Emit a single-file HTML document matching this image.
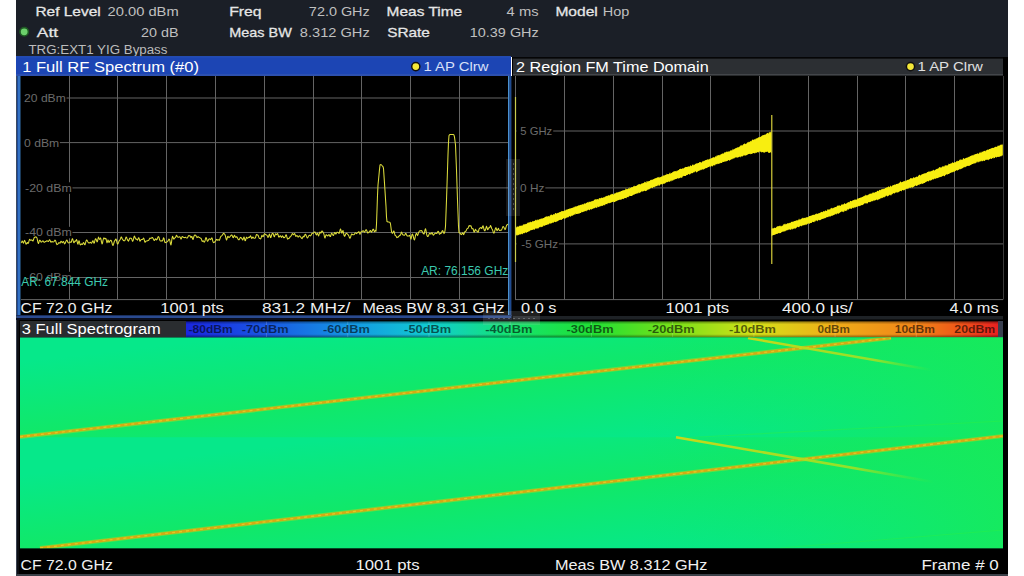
<!DOCTYPE html>
<html><head><meta charset="utf-8"><style>html,body{margin:0;padding:0;background:#fff;width:1024px;height:576px;overflow:hidden}svg{display:block}</style></head>
<body><svg width="1024" height="576" viewBox="0 0 1024 576" font-family="'Liberation Sans', sans-serif"><rect x="0" y="0" width="1024" height="576" fill="#ffffff" />
<rect x="16" y="0" width="992" height="57" fill="#1b1f27" />
<text x="35.41" y="16" font-size="13.5" fill="#e6e6e6" text-anchor="start" font-weight="normal" textLength="65.34" lengthAdjust="spacingAndGlyphs"  stroke="#e6e6e6" stroke-width="0.28">Ref Level</text>
<text x="107.56" y="16" font-size="13.5" fill="#c0c0c0" text-anchor="start" font-weight="normal" textLength="71.11" lengthAdjust="spacingAndGlyphs" >20.00 dBm</text>
<text x="36.86" y="37" font-size="13.5" fill="#e6e6e6" text-anchor="start" font-weight="normal" textLength="21.22" lengthAdjust="spacingAndGlyphs"  stroke="#e6e6e6" stroke-width="0.28">Att</text>
<text x="140.98" y="37" font-size="13.5" fill="#c0c0c0" text-anchor="start" font-weight="normal" textLength="37.48" lengthAdjust="spacingAndGlyphs" >20 dB</text>
<circle cx="24.2" cy="31.8" r="4.2" fill="#6cd06c" stroke="#1f5a24" stroke-width="1.6"/>
<text x="28.47" y="54.2" font-size="12.5" fill="#bcbcbc" text-anchor="start" font-weight="normal" textLength="138.99" lengthAdjust="spacingAndGlyphs" >TRG:EXT1 YIG Bypass</text>
<text x="229.19" y="16" font-size="13.5" fill="#e6e6e6" text-anchor="start" font-weight="normal" textLength="32.4" lengthAdjust="spacingAndGlyphs"  stroke="#e6e6e6" stroke-width="0.28">Freq</text>
<text x="308.88" y="16" font-size="13.5" fill="#c0c0c0" text-anchor="start" font-weight="normal" textLength="60.83" lengthAdjust="spacingAndGlyphs" >72.0 GHz</text>
<text x="229.3" y="37" font-size="13.5" fill="#e6e6e6" text-anchor="start" font-weight="normal" textLength="62.51" lengthAdjust="spacingAndGlyphs"  stroke="#e6e6e6" stroke-width="0.28">Meas BW</text>
<text x="299.84" y="37" font-size="13.5" fill="#c0c0c0" text-anchor="start" font-weight="normal" textLength="69.89" lengthAdjust="spacingAndGlyphs" >8.312 GHz</text>
<text x="386.61" y="16" font-size="13.5" fill="#e6e6e6" text-anchor="start" font-weight="normal" textLength="75.54" lengthAdjust="spacingAndGlyphs"  stroke="#e6e6e6" stroke-width="0.28">Meas Time</text>
<text x="506.63" y="16" font-size="13.5" fill="#c0c0c0" text-anchor="start" font-weight="normal" textLength="31.91" lengthAdjust="spacingAndGlyphs" >4 ms</text>
<text x="555.4" y="16" font-size="13.5" fill="#e6e6e6" text-anchor="start" font-weight="normal" textLength="42.42" lengthAdjust="spacingAndGlyphs"  stroke="#e6e6e6" stroke-width="0.28">Model</text>
<text x="602.74" y="16" font-size="13.5" fill="#c0c0c0" text-anchor="start" font-weight="normal" textLength="26.53" lengthAdjust="spacingAndGlyphs" >Hop</text>
<text x="387.16" y="37" font-size="13.5" fill="#e6e6e6" text-anchor="start" font-weight="normal" textLength="42.78" lengthAdjust="spacingAndGlyphs"  stroke="#e6e6e6" stroke-width="0.28">SRate</text>
<text x="469.82" y="37" font-size="13.5" fill="#c0c0c0" text-anchor="start" font-weight="normal" textLength="68.91" lengthAdjust="spacingAndGlyphs" >10.39 GHz</text>
<rect x="16" y="56.3" width="495" height="263.7" fill="#101828" />
<rect x="16" y="56.3" width="495" height="19.7" fill="#1c45b4" />
<rect x="16" y="56.3" width="495" height="1" fill="#2a55c0" />
<rect x="16" y="74" width="495" height="2" fill="#2c50b0" />
<rect x="16" y="76" width="1" height="244" fill="#3a4a60" />
<rect x="17" y="76" width="1" height="244" fill="#1e4a9a" />
<rect x="18" y="76" width="2" height="244" fill="#3272c4" />
<rect x="20" y="76" width="1" height="244" fill="#1a3a5a" />
<rect x="508" y="76" width="1.5" height="244" fill="#4a90d0" />
<rect x="509.5" y="76" width="1.5" height="244" fill="#1e4a90" />
<rect x="511" y="76" width="1" height="244" fill="#10203a" />
<rect x="16" y="315" width="496" height="1" fill="#1a3060" />
<rect x="17" y="316" width="494" height="2" fill="#2a4a90" />
<rect x="16" y="318" width="496" height="2" fill="#0c1020" />
<rect x="21" y="76" width="487" height="239" fill="#000" />
<rect x="512" y="57" width="496" height="263" fill="#000" />
<rect x="513" y="57" width="490" height="1.8" fill="#050506" />
<rect x="513" y="58.6" width="490" height="15.6" fill="#2c2f33" />
<rect x="513" y="74" width="490" height="1.6" fill="#43464a" />
<rect x="515" y="76" width="488" height="240" fill="#000" />
<rect x="513" y="316" width="490" height="3.5" fill="#1e2226" />
<line x1="69.50" y1="76" x2="69.50" y2="299.6" stroke="#646464" stroke-width="1"/>
<line x1="117.50" y1="76" x2="117.50" y2="299.6" stroke="#646464" stroke-width="1"/>
<line x1="166.50" y1="76" x2="166.50" y2="299.6" stroke="#646464" stroke-width="1"/>
<line x1="215.50" y1="76" x2="215.50" y2="299.6" stroke="#646464" stroke-width="1"/>
<line x1="264.50" y1="76" x2="264.50" y2="299.6" stroke="#646464" stroke-width="1"/>
<line x1="313.50" y1="76" x2="313.50" y2="299.6" stroke="#646464" stroke-width="1"/>
<line x1="361.50" y1="76" x2="361.50" y2="299.6" stroke="#646464" stroke-width="1"/>
<line x1="410.50" y1="76" x2="410.50" y2="299.6" stroke="#646464" stroke-width="1"/>
<line x1="459.50" y1="76" x2="459.50" y2="299.6" stroke="#646464" stroke-width="1"/>
<line x1="21" y1="98.00" x2="508" y2="98.00" stroke="#646464" stroke-width="1"/>
<line x1="21" y1="142.60" x2="508" y2="142.60" stroke="#646464" stroke-width="1"/>
<line x1="21" y1="187.90" x2="508" y2="187.90" stroke="#646464" stroke-width="1"/>
<line x1="21" y1="232.50" x2="508" y2="232.50" stroke="#646464" stroke-width="1"/>
<line x1="21" y1="277.50" x2="508" y2="277.50" stroke="#646464" stroke-width="1"/>
<line x1="21" y1="299.60" x2="508" y2="299.60" stroke="#646464" stroke-width="1"/>
<line x1="515.50" y1="76" x2="515.50" y2="299.6" stroke="#646464" stroke-width="1"/>
<line x1="564.50" y1="76" x2="564.50" y2="299.6" stroke="#646464" stroke-width="1"/>
<line x1="613.50" y1="76" x2="613.50" y2="299.6" stroke="#646464" stroke-width="1"/>
<line x1="662.50" y1="76" x2="662.50" y2="299.6" stroke="#646464" stroke-width="1"/>
<line x1="710.50" y1="76" x2="710.50" y2="299.6" stroke="#646464" stroke-width="1"/>
<line x1="759.50" y1="76" x2="759.50" y2="299.6" stroke="#646464" stroke-width="1"/>
<line x1="808.50" y1="76" x2="808.50" y2="299.6" stroke="#646464" stroke-width="1"/>
<line x1="857.50" y1="76" x2="857.50" y2="299.6" stroke="#646464" stroke-width="1"/>
<line x1="905.50" y1="76" x2="905.50" y2="299.6" stroke="#646464" stroke-width="1"/>
<line x1="954.50" y1="76" x2="954.50" y2="299.6" stroke="#646464" stroke-width="1"/>
<line x1="515" y1="131.00" x2="1003" y2="131.00" stroke="#646464" stroke-width="1"/>
<line x1="515" y1="187.90" x2="1003" y2="187.90" stroke="#646464" stroke-width="1"/>
<line x1="515" y1="243.90" x2="1003" y2="243.90" stroke="#646464" stroke-width="1"/>
<line x1="515" y1="299.60" x2="1003" y2="299.60" stroke="#646464" stroke-width="1"/>
<line x1="1003.50" y1="76" x2="1003.50" y2="299.5" stroke="#3a3a3a" stroke-width="1"/>
<rect x="21" y="92.3" width="45.5" height="11.5" fill="#000" />
<text x="24.09" y="101.8" font-size="11" fill="#6c6c6c" text-anchor="start" font-weight="normal" textLength="41.71" lengthAdjust="spacingAndGlyphs" >20 dBm</text>
<rect x="21" y="137.3" width="38.9" height="11.5" fill="#000" />
<text x="24.11" y="146.8" font-size="11" fill="#6c6c6c" text-anchor="start" font-weight="normal" textLength="35.14" lengthAdjust="spacingAndGlyphs" >0 dBm</text>
<rect x="21" y="182.3" width="51.5" height="11.5" fill="#000" />
<text x="25.04" y="191.8" font-size="11" fill="#6c6c6c" text-anchor="start" font-weight="normal" textLength="46.82" lengthAdjust="spacingAndGlyphs" >-20 dBm</text>
<rect x="21" y="226.8" width="51.5" height="11.5" fill="#000" />
<text x="25.04" y="236.3" font-size="11" fill="#6c6c6c" text-anchor="start" font-weight="normal" textLength="46.82" lengthAdjust="spacingAndGlyphs" >-40 dBm</text>
<rect x="21" y="271.8" width="51.5" height="11.5" fill="#000" />
<text x="25.04" y="281.3" font-size="11" fill="#6c6c6c" text-anchor="start" font-weight="normal" textLength="46.82" lengthAdjust="spacingAndGlyphs" >-60 dBm</text>
<rect x="516.5" y="125.80000000000001" width="36.700000000000045" height="11.5" fill="#000" />
<text x="520.35" y="135.3" font-size="11" fill="#6c6c6c" text-anchor="start" font-weight="normal" textLength="31.9" lengthAdjust="spacingAndGlyphs" >5 GHz</text>
<rect x="516.5" y="182.3" width="28.799999999999955" height="11.5" fill="#000" />
<text x="520.13" y="191.8" font-size="11" fill="#6c6c6c" text-anchor="start" font-weight="normal" textLength="24.28" lengthAdjust="spacingAndGlyphs" >0 Hz</text>
<rect x="516.5" y="238.3" width="42.39999999999998" height="11.5" fill="#000" />
<text x="521.28" y="247.8" font-size="11" fill="#6c6c6c" text-anchor="start" font-weight="normal" textLength="36.73" lengthAdjust="spacingAndGlyphs" >-5 GHz</text>
<polyline points="21.0,243.0 21.5,242.5 22.0,241.1 22.5,241.1 23.0,242.5 23.5,243.1 24.0,241.6 24.5,240.4 25.0,241.0 25.5,242.9 26.0,244.1 26.5,244.0 27.0,242.8 27.5,242.5 28.0,243.4 28.5,243.1 29.0,240.9 29.5,239.3 30.0,239.7 30.5,240.3 31.0,240.2 31.5,239.9 32.0,240.1 32.5,240.8 33.0,241.0 33.5,239.8 34.0,238.1 34.5,237.3 35.0,237.3 35.5,237.0 36.0,236.8 36.5,237.3 37.0,238.0 37.5,240.3 38.0,242.7 38.5,243.5 39.0,242.0 39.5,240.2 40.0,240.2 40.5,241.1 41.0,242.0 41.5,242.1 42.0,241.6 42.5,241.1 43.0,240.8 43.5,241.5 44.0,242.2 44.5,242.3 45.0,241.8 45.5,241.5 46.0,241.4 46.5,241.0 47.0,240.8 47.5,241.0 48.0,241.5 48.5,241.5 49.0,240.6 49.5,239.7 50.0,240.1 50.5,241.4 51.0,242.2 51.5,241.9 52.0,241.5 52.5,241.7 53.0,242.0 53.5,241.9 54.0,241.6 54.5,240.8 55.0,240.1 55.5,240.4 56.0,242.1 56.5,243.8 57.0,244.6 57.5,244.3 58.0,243.8 58.5,243.2 59.0,242.6 59.5,242.9 60.0,243.2 60.5,242.1 61.0,241.2 61.5,241.6 62.0,242.6 62.5,242.6 63.0,241.7 63.5,241.5 64.0,242.6 64.5,243.9 65.0,243.5 65.5,242.2 66.0,241.2 66.5,240.3 67.0,240.1 67.5,241.2 68.0,242.6 68.5,242.9 69.0,242.7 69.5,242.4 70.0,242.0 70.5,242.1 71.0,242.4 71.5,241.5 72.0,239.3 72.5,238.7 73.0,240.0 73.5,242.1 74.0,242.8 74.5,241.9 75.0,241.1 75.5,241.3 76.0,240.7 76.5,239.5 77.0,240.6 77.5,243.5 78.0,244.2 78.5,242.2 79.0,240.7 79.5,242.0 80.0,244.3 80.5,244.9 81.0,244.3 81.5,243.9 82.0,244.4 82.5,244.4 83.0,243.3 83.5,242.5 84.0,243.0 84.5,244.5 85.0,244.8 85.5,243.2 86.0,241.1 86.5,240.0 87.0,240.3 87.5,241.3 88.0,242.1 88.5,242.7 89.0,243.0 89.5,242.9 90.0,242.4 90.5,242.3 91.0,243.0 91.5,243.3 92.0,242.5 92.5,241.1 93.0,240.7 93.5,242.1 94.0,243.3 94.5,242.4 95.0,240.0 95.5,238.7 96.0,238.9 96.5,240.4 97.0,241.9 97.5,241.4 98.0,238.8 98.5,237.1 99.0,238.3 99.5,239.4 100.0,238.9 100.5,237.9 101.0,239.3 101.5,242.2 102.0,243.9 102.5,243.1 103.0,240.4 103.5,238.6 104.0,237.9 104.5,238.5 105.0,238.9 105.5,238.3 106.0,238.7 106.5,240.9 107.0,242.8 107.5,241.5 108.0,239.9 108.5,240.9 109.0,242.5 109.5,242.0 110.0,240.8 110.5,240.3 111.0,240.3 111.5,241.1 112.0,242.9 112.5,244.9 113.0,245.5 113.5,244.4 114.0,242.5 114.5,241.0 115.0,240.4 115.5,239.4 116.0,239.0 116.5,240.5 117.0,242.9 117.5,244.0 118.0,243.7 118.5,242.5 119.0,241.1 119.5,240.3 120.0,239.8 120.5,238.7 121.0,237.3 121.5,237.0 122.0,238.2 122.5,239.3 123.0,239.9 123.5,240.5 124.0,240.8 124.5,240.8 125.0,240.4 125.5,238.7 126.0,237.1 126.5,237.2 127.0,238.7 127.5,239.9 128.0,240.6 128.5,241.1 129.0,240.1 129.5,238.7 130.0,238.1 130.5,238.3 131.0,238.3 131.5,238.5 132.0,239.9 132.5,241.3 133.0,240.9 133.5,239.1 134.0,236.9 134.5,236.1 135.0,237.2 135.5,238.6 136.0,239.2 136.5,239.1 137.0,239.7 137.5,240.1 138.0,239.0 138.5,237.7 139.0,237.9 139.5,240.0 140.0,241.2 140.5,240.7 141.0,239.6 141.5,239.5 142.0,239.6 142.5,239.4 143.0,238.8 143.5,238.1 144.0,238.9 144.5,241.0 145.0,242.3 145.5,241.8 146.0,240.9 146.5,240.9 147.0,240.9 147.5,240.7 148.0,240.6 148.5,240.5 149.0,239.9 149.5,238.8 150.0,238.0 150.5,238.3 151.0,238.5 151.5,238.0 152.0,237.4 152.5,237.6 153.0,238.3 153.5,239.2 154.0,240.3 154.5,240.5 155.0,239.6 155.5,238.8 156.0,239.1 156.5,239.9 157.0,239.6 157.5,238.1 158.0,236.9 158.5,236.6 159.0,237.5 159.5,239.3 160.0,240.6 160.5,241.0 161.0,240.9 161.5,240.8 162.0,241.0 162.5,240.7 163.0,239.4 163.5,237.8 164.0,238.4 164.5,241.1 165.0,242.7 165.5,242.6 166.0,242.3 166.5,242.3 167.0,241.9 167.5,241.4 168.0,240.9 168.5,240.0 169.0,239.1 169.5,239.4 170.0,241.3 170.5,244.0 171.0,244.9 171.5,242.2 172.0,238.3 172.5,236.3 173.0,237.0 173.5,238.8 174.0,239.1 174.5,238.2 175.0,237.8 175.5,237.6 176.0,236.3 176.5,235.3 177.0,235.9 177.5,236.9 178.0,237.2 178.5,237.3 179.0,237.1 179.5,236.7 180.0,236.9 180.5,238.1 181.0,239.1 181.5,238.3 182.0,236.7 182.5,236.5 183.0,237.0 183.5,237.4 184.0,237.4 184.5,237.6 185.0,237.6 185.5,237.2 186.0,237.6 186.5,237.9 187.0,238.1 187.5,237.8 188.0,236.7 188.5,235.8 189.0,235.6 189.5,235.7 190.0,235.8 190.5,237.0 191.0,237.6 191.5,236.6 192.0,236.6 192.5,238.5 193.0,239.5 193.5,238.0 194.0,236.2 194.5,235.3 195.0,235.0 195.5,235.2 196.0,235.7 196.5,236.7 197.0,237.6 197.5,237.3 198.0,236.7 198.5,236.8 199.0,237.3 199.5,237.4 200.0,237.8 200.5,238.2 201.0,238.2 201.5,239.4 202.0,241.1 202.5,241.4 203.0,240.7 203.5,241.1 204.0,242.0 204.5,242.1 205.0,240.9 205.5,238.7 206.0,237.5 206.5,238.3 207.0,240.2 207.5,241.2 208.0,240.9 208.5,239.8 209.0,239.0 209.5,238.8 210.0,239.2 210.5,239.6 211.0,239.1 211.5,238.0 212.0,238.0 212.5,239.8 213.0,241.8 213.5,242.6 214.0,242.5 214.5,242.1 215.0,241.7 215.5,241.0 216.0,240.1 216.5,239.4 217.0,239.6 217.5,240.2 218.0,240.1 218.5,239.7 219.0,240.0 219.5,240.2 220.0,238.6 220.5,237.0 221.0,236.2 221.5,236.0 222.0,235.5 222.5,234.9 223.0,234.0 223.5,233.2 224.0,233.6 224.5,234.0 225.0,234.7 225.5,236.1 226.0,238.6 226.5,240.0 227.0,239.0 227.5,236.9 228.0,236.2 228.5,237.2 229.0,237.6 229.5,237.2 230.0,236.6 230.5,236.0 231.0,235.4 231.5,235.0 232.0,235.1 232.5,236.2 233.0,237.6 233.5,237.7 234.0,236.1 234.5,235.3 235.0,236.3 235.5,237.3 236.0,237.3 236.5,236.7 237.0,237.0 237.5,237.9 238.0,238.9 238.5,239.8 239.0,239.8 239.5,239.2 240.0,238.1 240.5,237.4 241.0,237.5 241.5,238.1 242.0,238.8 242.5,239.9 243.0,239.7 243.5,238.0 244.0,237.0 244.5,238.4 245.0,240.7 245.5,240.5 246.0,238.6 246.5,237.2 247.0,237.8 247.5,238.3 248.0,237.8 248.5,237.3 249.0,237.3 249.5,237.4 250.0,236.5 250.5,235.8 251.0,236.7 251.5,238.3 252.0,238.4 252.5,237.2 253.0,237.1 253.5,237.9 254.0,238.1 254.5,238.2 255.0,238.3 255.5,237.6 256.0,235.8 256.5,234.5 257.0,234.6 257.5,235.0 258.0,235.3 258.5,236.3 259.0,237.9 259.5,238.5 260.0,238.5 260.5,239.0 261.0,238.3 261.5,236.3 262.0,235.2 262.5,236.1 263.0,236.8 263.5,236.1 264.0,234.6 264.5,233.7 265.0,234.0 265.5,234.5 266.0,234.8 266.5,234.9 267.0,235.3 267.5,236.4 268.0,237.4 268.5,236.8 269.0,235.0 269.5,234.1 270.0,235.6 270.5,237.6 271.0,237.3 271.5,235.3 272.0,233.8 272.5,233.4 273.0,233.5 273.5,234.8 274.0,236.4 274.5,236.7 275.0,235.1 275.5,233.8 276.0,234.2 276.5,234.7 277.0,234.2 277.5,233.5 278.0,234.5 278.5,236.3 279.0,237.2 279.5,236.7 280.0,235.9 280.5,235.7 281.0,236.7 281.5,237.4 282.0,236.6 282.5,235.9 283.0,236.3 283.5,237.5 284.0,237.8 284.5,237.6 285.0,237.0 285.5,235.8 286.0,234.7 286.5,235.3 287.0,237.5 287.5,239.1 288.0,239.0 288.5,238.4 289.0,238.4 289.5,237.9 290.0,236.9 290.5,236.2 291.0,236.1 291.5,235.5 292.0,234.1 292.5,233.5 293.0,234.1 293.5,234.8 294.0,234.3 294.5,233.5 295.0,234.1 295.5,235.8 296.0,236.4 296.5,235.9 297.0,235.5 297.5,236.0 298.0,237.0 298.5,237.0 299.0,236.2 299.5,235.8 300.0,236.1 300.5,236.8 301.0,237.4 301.5,238.3 302.0,238.6 302.5,237.9 303.0,236.8 303.5,236.2 304.0,236.9 304.5,236.2 305.0,234.5 305.5,234.2 306.0,235.0 306.5,236.4 307.0,237.6 307.5,238.0 308.0,237.2 308.5,236.1 309.0,235.5 309.5,235.2 310.0,235.6 310.5,235.9 311.0,235.4 311.5,234.2 312.0,233.4 312.5,233.2 313.0,233.2 313.5,233.0 314.0,232.2 314.5,232.1 315.0,232.0 315.5,233.0 316.0,234.4 316.5,234.9 317.0,233.8 317.5,233.1 318.0,234.6 318.5,235.9 319.0,235.0 319.5,232.8 320.0,232.1 320.5,232.9 321.0,233.0 321.5,231.8 322.0,230.9 322.5,231.3 323.0,232.2 323.5,232.9 324.0,234.4 324.5,237.0 325.0,238.0 325.5,236.3 326.0,234.8 326.5,234.8 327.0,235.5 327.5,235.9 328.0,235.8 328.5,235.0 329.0,234.6 329.5,235.3 330.0,236.5 330.5,236.5 331.0,234.8 331.5,233.2 332.0,233.4 332.5,234.4 333.0,235.3 333.5,235.5 334.0,234.1 334.5,232.6 335.0,232.5 335.5,233.7 336.0,233.9 336.5,233.0 337.0,232.3 337.5,232.2 338.0,232.4 338.5,233.0 339.0,233.4 339.5,232.4 340.0,230.2 340.5,229.0 341.0,230.3 341.5,232.8 342.0,233.1 342.5,231.2 343.0,230.5 343.5,232.6 344.0,235.3 344.5,236.3 345.0,235.8 345.5,234.5 346.0,233.4 346.5,233.2 347.0,233.5 347.5,234.1 348.0,234.6 348.5,235.3 349.0,236.4 349.5,237.7 350.0,238.3 350.5,237.4 351.0,235.6 351.5,234.1 352.0,234.0 352.5,234.5 353.0,234.8 353.5,234.7 354.0,234.7 354.5,234.2 355.0,232.9 355.5,232.8 356.0,233.2 356.5,233.6 357.0,233.2 357.5,232.8 358.0,232.5 358.5,231.8 359.0,231.8 359.5,233.2 360.0,234.3 360.5,233.3 361.0,232.0 361.5,231.7 362.0,231.7 362.5,231.1 363.0,230.7 363.5,230.9 364.0,231.6 364.5,232.3 365.0,231.5 365.5,230.4 366.0,229.7 366.5,230.0 367.0,231.3 367.5,232.7 368.0,233.0 368.5,232.2 369.0,232.1 369.5,231.9 370.0,230.7 370.5,230.5 371.0,231.6 371.5,232.1 372.0,231.4 372.5,230.2 373.0,229.2 373.5,229.3 374.0,230.7 374.5,231.8 375.0,231.0 375.5,230.2 376.0,231.3 376.5,224.1 377.0,209.9 377.5,195.6 378.0,185.0 378.5,180.0 379.0,174.8 379.5,169.4 380.0,165.0 380.5,164.7 381.0,164.5 381.5,165.0 382.0,165.5 382.5,166.1 383.0,166.6 383.5,168.5 384.0,175.9 384.5,183.3 385.0,190.9 385.5,198.7 386.0,206.4 386.5,217.0 387.0,221.6 387.5,221.7 388.0,221.9 388.5,222.0 389.0,222.1 389.5,222.3 390.0,222.4 390.5,224.0 391.0,227.8 391.5,231.5 392.0,232.9 392.5,233.3 393.0,232.7 393.5,231.1 394.0,231.1 394.5,233.2 395.0,235.2 395.5,235.5 396.0,236.0 396.5,237.1 397.0,237.7 397.5,237.3 398.0,236.8 398.5,236.9 399.0,236.1 399.5,235.2 400.0,235.4 400.5,235.1 401.0,233.3 401.5,232.1 402.0,233.1 402.5,234.4 403.0,234.9 403.5,234.9 404.0,235.2 404.5,235.3 405.0,234.4 405.5,233.4 406.0,233.5 406.5,234.7 407.0,235.8 407.5,236.1 408.0,235.9 408.5,236.0 409.0,235.9 409.5,235.4 410.0,235.9 410.5,238.0 411.0,239.1 411.5,237.2 412.0,234.7 412.5,234.1 413.0,235.2 413.5,237.4 414.0,239.4 414.5,239.9 415.0,238.2 415.5,235.5 416.0,233.8 416.5,233.3 417.0,234.4 417.5,235.6 418.0,234.7 418.5,232.6 419.0,231.7 419.5,231.3 420.0,230.6 420.5,230.8 421.0,230.9 421.5,230.5 422.0,231.0 422.5,232.3 423.0,233.1 423.5,233.7 424.0,234.0 424.5,232.6 425.0,229.9 425.5,228.7 426.0,230.5 426.5,233.5 427.0,235.6 427.5,236.5 428.0,236.5 428.5,235.8 429.0,234.4 429.5,233.2 430.0,233.3 430.5,234.0 431.0,234.1 431.5,233.1 432.0,232.6 432.5,233.5 433.0,234.8 433.5,235.2 434.0,234.5 434.5,233.9 435.0,233.5 435.5,233.1 436.0,233.2 436.5,233.4 437.0,233.3 437.5,232.2 438.0,231.2 438.5,231.4 439.0,233.2 439.5,234.3 440.0,233.9 440.5,233.3 441.0,233.4 441.5,232.7 442.0,231.3 442.5,230.6 443.0,231.2 443.5,232.6 444.0,233.6 444.5,232.7 445.0,230.8 445.5,226.4 446.0,213.2 446.5,200.0 447.0,185.0 447.5,170.0 448.0,154.4 448.5,142.3 449.0,135.5 449.5,134.9 450.0,134.5 450.5,134.5 451.0,134.5 451.5,134.5 452.0,134.5 452.5,134.5 453.0,134.5 453.5,134.5 454.0,135.1 454.5,137.1 455.0,141.0 455.5,145.0 456.0,157.5 456.5,170.0 457.0,185.0 457.5,200.0 458.0,213.2 458.5,226.4 459.0,232.8 459.5,232.6 460.0,233.1 460.5,233.7 461.0,234.4 461.5,234.6 462.0,233.7 462.5,232.7 463.0,233.2 463.5,234.6 464.0,234.2 464.5,232.5 465.0,231.5 465.5,231.4 466.0,231.0 466.5,229.9 467.0,228.8 467.5,228.4 468.0,228.3 468.5,227.2 469.0,225.7 469.5,225.6 470.0,226.1 470.5,225.7 471.0,225.8 471.5,227.3 472.0,228.7 472.5,228.7 473.0,228.6 473.5,230.2 474.0,232.0 474.5,231.9 475.0,230.1 475.5,229.3 476.0,230.3 476.5,230.9 477.0,230.9 477.5,231.4 478.0,232.3 478.5,231.4 479.0,229.2 479.5,228.3 480.0,228.2 480.5,227.7 481.0,227.5 481.5,228.4 482.0,228.3 482.5,226.5 483.0,225.7 483.5,227.1 484.0,229.3 484.5,230.7 485.0,230.7 485.5,229.6 486.0,227.6 486.5,226.3 487.0,227.6 487.5,229.7 488.0,229.5 488.5,228.0 489.0,227.8 489.5,227.8 490.0,226.7 490.5,225.5 491.0,226.3 491.5,228.1 492.0,229.0 492.5,229.8 493.0,231.3 493.5,232.9 494.0,233.1 494.5,231.9 495.0,229.8 495.5,228.1 496.0,227.7 496.5,229.3 497.0,230.6 497.5,230.3 498.0,228.8 498.5,228.4 499.0,229.8 499.5,230.5 500.0,230.6 500.5,230.2 501.0,230.3 501.5,230.0 502.0,228.9 502.5,227.6 503.0,226.5 503.5,226.8 504.0,227.5 504.5,228.7 505.0,229.6 505.5,229.0 506.0,227.1 506.5,225.6 507.0,224.9 507.5,224.3 508.0,224.7" fill="none" stroke="#dcdc3c" stroke-width="1.05" stroke-linejoin="round"/>
<text x="21.34" y="286" font-size="12" fill="#3ccab0" text-anchor="start" font-weight="normal" textLength="86.67" lengthAdjust="spacingAndGlyphs" >AR: 67.844 GHz</text>
<text x="421.14" y="274.8" font-size="12" fill="#3ccab0" text-anchor="start" font-weight="normal" textLength="87.17" lengthAdjust="spacingAndGlyphs" >AR: 76.156 GHz</text>
<polygon points="516.0,228.0 516.5,227.1 517.0,226.6 517.5,226.6 518.0,226.7 518.5,226.4 519.0,226.4 519.5,225.7 520.0,225.5 520.5,226.1 521.0,225.6 521.5,225.9 522.0,225.1 522.5,226.0 523.0,224.4 523.5,224.6 524.0,224.3 524.5,224.3 525.0,224.5 525.5,224.0 526.0,223.7 526.5,224.0 527.0,223.6 527.5,222.7 528.0,222.4 528.5,222.7 529.0,222.2 529.5,222.2 530.0,222.5 530.5,221.5 531.0,221.9 531.5,222.2 532.0,221.8 532.5,221.3 533.0,220.8 533.5,221.4 534.0,221.1 534.5,221.0 535.0,220.6 535.5,220.0 536.0,219.6 536.5,220.3 537.0,220.5 537.5,219.4 538.0,219.6 538.5,220.3 539.0,218.9 539.5,219.2 540.0,219.2 540.5,219.1 541.0,218.3 541.5,218.4 542.0,218.9 542.5,218.2 543.0,218.2 543.5,218.1 544.0,218.0 544.5,217.2 545.0,217.3 545.5,216.4 546.0,217.1 546.5,216.1 547.0,216.8 547.5,216.5 548.1,215.9 548.6,215.9 549.1,217.1 549.6,215.7 550.1,215.5 550.6,215.0 551.1,214.2 551.6,214.7 552.1,215.3 552.6,215.0 553.1,214.4 553.6,213.9 554.1,214.5 554.6,214.3 555.1,213.1 555.6,213.1 556.1,213.5 556.6,213.4 557.1,213.2 557.6,213.0 558.1,212.6 558.6,213.1 559.1,212.5 559.6,212.1 560.1,211.9 560.6,211.8 561.1,211.8 561.6,210.8 562.1,211.3 562.6,211.0 563.1,211.3 563.6,210.9 564.1,210.7 564.6,210.3 565.1,211.0 565.6,209.8 566.1,209.8 566.6,209.5 567.1,209.8 567.6,209.3 568.1,209.1 568.6,208.9 569.1,208.8 569.6,208.6 570.1,208.7 570.6,208.2 571.1,207.9 571.6,208.2 572.1,207.7 572.6,207.7 573.1,208.1 573.6,206.7 574.1,207.5 574.6,206.5 575.1,206.9 575.6,206.1 576.1,206.7 576.6,206.2 577.1,205.7 577.6,206.3 578.1,205.5 578.6,205.5 579.1,205.0 579.6,205.5 580.1,205.1 580.6,204.7 581.1,205.0 581.6,204.4 582.1,204.4 582.6,203.9 583.1,204.4 583.6,204.3 584.1,203.3 584.6,203.4 585.1,203.7 585.6,203.6 586.1,203.0 586.6,203.0 587.1,202.0 587.6,202.2 588.1,203.0 588.6,201.8 589.1,201.7 589.6,201.7 590.1,202.0 590.6,201.6 591.1,201.7 591.6,201.0 592.1,201.2 592.6,200.9 593.1,200.5 593.6,201.0 594.1,200.1 594.6,199.6 595.1,199.5 595.6,199.1 596.1,200.0 596.6,199.0 597.1,199.1 597.6,198.9 598.1,199.7 598.6,199.1 599.1,198.1 599.6,198.3 600.1,198.3 600.6,198.2 601.1,197.9 601.6,197.6 602.1,197.8 602.6,198.0 603.1,197.6 603.6,197.2 604.1,197.4 604.6,196.9 605.1,196.6 605.6,196.6 606.1,196.2 606.6,196.0 607.1,195.6 607.6,196.2 608.1,195.2 608.6,195.3 609.1,195.6 609.6,195.4 610.1,194.8 610.6,194.8 611.1,193.8 611.6,194.6 612.2,194.1 612.7,193.8 613.2,195.0 613.7,194.3 614.2,193.7 614.7,193.3 615.2,193.4 615.7,193.0 616.2,192.5 616.7,192.5 617.2,192.8 617.7,192.3 618.2,191.7 618.7,192.4 619.2,191.7 619.7,191.8 620.2,191.6 620.7,191.6 621.2,191.0 621.7,191.0 622.2,190.6 622.7,190.4 623.2,190.5 623.7,190.0 624.2,190.2 624.7,190.1 625.2,189.9 625.7,188.1 626.2,189.6 626.7,188.7 627.2,189.1 627.7,189.2 628.2,188.3 628.7,188.2 629.2,189.1 629.7,187.3 630.2,187.8 630.7,187.9 631.2,187.6 631.7,186.9 632.2,186.9 632.7,187.2 633.2,186.8 633.7,185.8 634.2,186.5 634.7,185.6 635.2,186.3 635.7,186.0 636.2,186.0 636.7,185.4 637.2,185.3 637.7,184.8 638.2,184.6 638.7,184.3 639.2,184.2 639.7,184.1 640.2,184.5 640.7,184.3 641.2,183.8 641.7,183.6 642.2,183.3 642.7,183.4 643.2,182.8 643.7,183.3 644.2,182.4 644.7,181.5 645.2,182.5 645.7,181.8 646.2,182.9 646.7,180.8 647.2,181.7 647.7,181.3 648.2,181.1 648.7,181.4 649.2,181.0 649.7,180.9 650.2,180.2 650.7,180.1 651.2,179.5 651.7,180.3 652.2,179.2 652.7,180.1 653.2,179.2 653.7,179.0 654.2,178.8 654.7,178.4 655.2,178.5 655.7,178.1 656.2,177.8 656.7,178.3 657.2,176.7 657.7,177.7 658.2,177.4 658.7,176.7 659.2,178.0 659.7,176.7 660.2,177.1 660.7,177.3 661.2,176.6 661.7,176.4 662.2,176.5 662.7,175.9 663.2,175.2 663.7,175.7 664.2,175.2 664.7,175.6 665.2,175.0 665.7,174.8 666.2,175.0 666.7,173.6 667.2,174.3 667.7,173.9 668.2,174.2 668.7,174.1 669.2,173.7 669.7,172.7 670.2,172.5 670.7,174.0 671.2,172.9 671.7,173.0 672.2,172.6 672.7,172.1 673.2,171.8 673.7,171.6 674.2,171.1 674.7,171.5 675.2,171.1 675.8,171.2 676.3,171.4 676.8,170.5 677.3,171.1 677.8,170.3 678.3,170.0 678.8,170.3 679.3,169.1 679.8,169.2 680.3,168.5 680.8,168.9 681.3,169.1 681.8,168.7 682.3,168.5 682.8,168.3 683.3,168.7 683.8,168.1 684.3,167.8 684.8,167.5 685.3,166.7 685.8,167.2 686.3,167.1 686.8,166.9 687.3,167.1 687.8,166.4 688.3,166.8 688.8,165.9 689.3,166.8 689.8,166.3 690.3,165.3 690.8,165.4 691.3,166.2 691.8,165.8 692.3,164.7 692.8,164.5 693.3,164.4 693.8,165.6 694.3,164.7 694.8,164.4 695.3,163.5 695.8,164.2 696.3,163.1 696.8,163.7 697.3,163.3 697.8,163.3 698.3,162.9 698.8,163.0 699.3,162.0 699.8,162.3 700.3,162.1 700.8,162.3 701.3,162.6 701.8,162.4 702.3,161.8 702.8,160.7 703.3,161.6 703.8,160.7 704.3,161.1 704.8,160.6 705.3,160.0 705.8,160.2 706.3,159.8 706.8,159.9 707.3,159.2 707.8,159.5 708.3,159.4 708.8,159.5 709.3,158.4 709.8,159.4 710.3,158.5 710.8,158.7 711.3,158.1 711.8,158.2 712.3,158.0 712.8,157.3 713.3,156.9 713.8,157.6 714.3,157.3 714.8,157.6 715.3,156.5 715.8,156.0 716.3,156.8 716.8,155.2 717.3,155.6 717.8,155.6 718.3,155.2 718.8,154.9 719.3,154.7 719.8,155.6 720.3,155.1 720.8,154.1 721.3,154.3 721.8,153.8 722.3,153.5 722.8,153.6 723.3,153.8 723.8,153.3 724.3,152.2 724.8,152.5 725.3,152.4 725.8,152.0 726.3,152.0 726.8,151.3 727.3,152.0 727.8,151.6 728.3,151.5 728.8,151.5 729.3,150.9 729.8,151.8 730.3,150.8 730.8,150.1 731.3,150.3 731.8,150.6 732.3,150.3 732.8,148.7 733.3,149.3 733.8,149.8 734.3,148.9 734.8,148.7 735.3,148.0 735.8,148.4 736.3,148.1 736.8,147.8 737.3,147.2 737.8,147.6 738.3,147.1 738.8,147.4 739.3,146.4 739.9,146.5 740.4,145.8 740.9,145.1 741.4,145.8 741.9,144.7 742.4,145.8 742.9,144.8 743.4,144.3 743.9,144.0 744.4,143.6 744.9,143.4 745.4,144.2 745.9,143.8 746.4,143.4 746.9,143.2 747.4,142.4 747.9,142.1 748.4,142.5 748.9,141.6 749.4,142.2 749.9,141.5 750.4,141.3 750.9,140.8 751.4,141.5 751.9,140.1 752.4,139.9 752.9,139.1 753.4,140.3 753.9,139.4 754.4,139.4 754.9,138.9 755.4,139.5 755.9,138.2 756.4,138.3 756.9,138.8 757.4,138.0 757.9,137.8 758.4,137.6 758.9,137.1 759.4,137.0 759.9,137.5 760.4,136.4 760.9,136.9 761.4,135.9 761.9,135.8 762.4,135.6 762.9,135.1 763.4,135.1 763.9,135.2 764.4,134.7 764.9,134.4 765.4,134.4 765.9,134.5 766.4,133.4 766.9,133.5 767.4,132.8 767.9,133.1 768.4,133.8 768.9,132.2 769.4,132.5 769.9,131.7 770.4,132.4 770.9,131.4 771.4,131.6 771.4,153.5 770.9,152.3 770.4,152.3 769.9,152.9 769.4,152.8 768.9,152.9 768.4,152.7 767.9,152.0 767.4,151.6 766.9,151.8 766.4,152.0 765.9,151.7 765.4,152.1 764.9,152.7 764.4,152.5 763.9,152.5 763.4,152.4 762.9,152.1 762.4,152.2 761.9,151.8 761.4,152.8 760.9,151.8 760.4,151.7 759.9,151.5 759.4,151.6 758.9,152.1 758.4,152.8 757.9,152.1 757.4,152.3 756.9,152.4 756.4,152.9 755.9,152.6 755.4,153.0 754.9,153.7 754.4,152.9 753.9,153.2 753.4,153.0 752.9,153.0 752.4,153.7 751.9,154.0 751.4,153.9 750.9,153.6 750.4,154.5 749.9,153.7 749.4,154.0 748.9,154.0 748.4,154.1 747.9,154.8 747.4,154.4 746.9,155.1 746.4,155.3 745.9,155.5 745.4,155.6 744.9,155.8 744.4,155.5 743.9,154.8 743.4,156.0 742.9,156.0 742.4,156.7 741.9,156.1 741.4,156.8 740.9,156.2 740.4,157.6 739.9,156.9 739.3,156.5 738.8,157.6 738.3,157.1 737.8,157.6 737.3,157.7 736.8,157.3 736.3,157.4 735.8,157.9 735.3,157.1 734.8,157.8 734.3,158.4 733.8,158.3 733.3,158.7 732.8,158.6 732.3,159.3 731.8,159.5 731.3,158.9 730.8,160.3 730.3,159.5 729.8,160.5 729.3,160.7 728.8,160.0 728.3,160.0 727.8,160.9 727.3,160.8 726.8,160.9 726.3,161.5 725.8,160.9 725.3,161.7 724.8,162.0 724.3,161.2 723.8,161.9 723.3,162.1 722.8,161.8 722.3,162.5 721.8,162.9 721.3,163.0 720.8,162.8 720.3,163.3 719.8,163.5 719.3,163.6 718.8,163.7 718.3,164.1 717.8,163.6 717.3,164.3 716.8,164.3 716.3,164.3 715.8,163.9 715.3,165.2 714.8,165.5 714.3,165.3 713.8,165.5 713.3,164.9 712.8,166.7 712.3,165.9 711.8,166.5 711.3,165.6 710.8,167.0 710.3,166.6 709.8,166.0 709.3,167.3 708.8,167.1 708.3,167.1 707.8,167.4 707.3,167.5 706.8,168.3 706.3,168.1 705.8,167.9 705.3,168.4 704.8,168.7 704.3,169.1 703.8,169.4 703.3,169.6 702.8,169.2 702.3,169.6 701.8,169.4 701.3,170.0 700.8,170.4 700.3,169.6 699.8,171.2 699.3,170.1 698.8,171.3 698.3,170.8 697.8,171.5 697.3,171.7 696.8,172.7 696.3,172.0 695.8,172.1 695.3,170.7 694.8,171.7 694.3,172.4 693.8,172.4 693.3,172.3 692.8,173.0 692.3,173.2 691.8,173.4 691.3,172.9 690.8,173.4 690.3,174.3 689.8,174.3 689.3,174.7 688.8,174.1 688.3,173.9 687.8,175.0 687.3,174.8 686.8,175.3 686.3,175.1 685.8,176.1 685.3,176.1 684.8,176.0 684.3,176.1 683.8,175.7 683.3,176.3 682.8,176.2 682.3,177.5 681.8,177.8 681.3,177.7 680.8,177.8 680.3,177.5 679.8,177.9 679.3,178.2 678.8,178.5 678.3,178.6 677.8,178.1 677.3,178.6 676.8,179.0 676.3,178.8 675.8,179.3 675.2,178.9 674.7,179.7 674.2,179.4 673.7,179.7 673.2,180.4 672.7,180.3 672.2,181.0 671.7,180.2 671.2,181.4 670.7,181.6 670.2,180.6 669.7,181.9 669.2,181.8 668.7,181.2 668.2,182.1 667.7,182.3 667.2,182.1 666.7,182.3 666.2,182.2 665.7,183.6 665.2,182.6 664.7,183.5 664.2,184.0 663.7,183.4 663.2,184.0 662.7,184.7 662.2,183.7 661.7,184.4 661.2,184.1 660.7,184.5 660.2,184.5 659.7,185.2 659.2,186.2 658.7,186.0 658.2,184.5 657.7,185.5 657.2,186.3 656.7,186.2 656.2,186.1 655.7,186.3 655.2,186.8 654.7,186.7 654.2,187.4 653.7,187.0 653.2,187.1 652.7,188.2 652.2,187.9 651.7,187.7 651.2,187.7 650.7,188.3 650.2,188.4 649.7,188.8 649.2,189.4 648.7,189.1 648.2,190.0 647.7,189.4 647.2,190.2 646.7,190.4 646.2,190.9 645.7,191.0 645.2,191.3 644.7,190.5 644.2,191.1 643.7,191.1 643.2,191.6 642.7,191.6 642.2,191.4 641.7,191.3 641.2,191.7 640.7,192.4 640.2,192.2 639.7,192.8 639.2,193.2 638.7,192.3 638.2,193.4 637.7,193.2 637.2,193.5 636.7,193.4 636.2,193.8 635.7,194.1 635.2,193.7 634.7,194.9 634.2,194.0 633.7,194.7 633.2,195.0 632.7,195.2 632.2,195.8 631.7,196.1 631.2,195.9 630.7,196.0 630.2,195.9 629.7,196.6 629.2,195.5 628.7,197.6 628.2,196.4 627.7,197.2 627.2,196.9 626.7,197.5 626.2,198.4 625.7,197.9 625.2,198.1 624.7,197.9 624.2,198.4 623.7,198.8 623.2,199.2 622.7,198.7 622.2,199.0 621.7,199.4 621.2,199.5 620.7,199.5 620.2,200.0 619.7,199.8 619.2,199.7 618.7,200.3 618.2,200.0 617.7,201.0 617.2,200.1 616.7,201.2 616.2,201.0 615.7,201.4 615.2,201.5 614.7,202.3 614.2,201.9 613.7,202.1 613.2,201.6 612.7,202.0 612.2,202.0 611.6,202.6 611.1,202.3 610.6,203.0 610.1,202.8 609.6,203.5 609.1,202.8 608.6,203.0 608.1,203.6 607.6,203.3 607.1,204.6 606.6,203.9 606.1,204.1 605.6,204.1 605.1,205.2 604.6,204.8 604.1,205.7 603.6,204.7 603.1,205.6 602.6,205.9 602.1,205.7 601.6,205.8 601.1,206.2 600.6,206.4 600.1,205.8 599.6,206.7 599.1,206.7 598.6,207.3 598.1,206.8 597.6,206.5 597.1,207.9 596.6,208.1 596.1,207.5 595.6,207.5 595.1,207.8 594.6,208.1 594.1,208.4 593.6,208.4 593.1,208.3 592.6,209.0 592.1,208.9 591.6,209.4 591.1,209.6 590.6,209.3 590.1,209.3 589.6,210.4 589.1,210.1 588.6,209.6 588.1,209.9 587.6,210.7 587.1,209.8 586.6,211.1 586.1,211.4 585.6,210.7 585.1,211.2 584.6,211.6 584.1,211.2 583.6,211.8 583.1,212.0 582.6,212.2 582.1,212.0 581.6,211.8 581.1,212.9 580.6,213.0 580.1,212.9 579.6,213.5 579.1,213.4 578.6,213.5 578.1,213.9 577.6,213.8 577.1,214.0 576.6,213.9 576.1,214.0 575.6,213.5 575.1,215.2 574.6,214.0 574.1,214.9 573.6,214.8 573.1,215.4 572.6,215.6 572.1,216.0 571.6,215.6 571.1,216.2 570.6,216.8 570.1,216.6 569.6,216.0 569.1,216.4 568.6,216.9 568.1,217.5 567.6,217.2 567.1,217.5 566.6,217.8 566.1,217.8 565.6,218.6 565.1,218.6 564.6,218.7 564.1,218.5 563.6,218.1 563.1,218.8 562.6,219.3 562.1,219.0 561.6,220.0 561.1,219.9 560.6,219.9 560.1,219.6 559.6,220.3 559.1,220.1 558.6,220.5 558.1,221.1 557.6,221.3 557.1,221.3 556.6,221.7 556.1,221.8 555.6,222.1 555.1,222.3 554.6,221.7 554.1,221.8 553.6,222.9 553.1,222.4 552.6,222.8 552.1,222.8 551.6,223.3 551.1,223.5 550.6,223.3 550.1,223.9 549.6,223.1 549.1,224.3 548.6,224.2 548.1,224.5 547.5,224.4 547.0,224.8 546.5,225.1 546.0,225.0 545.5,225.3 545.0,225.4 544.5,225.8 544.0,225.9 543.5,225.3 543.0,226.7 542.5,226.6 542.0,226.9 541.5,227.2 541.0,226.5 540.5,227.1 540.0,227.5 539.5,227.1 539.0,227.4 538.5,228.2 538.0,228.7 537.5,228.3 537.0,228.4 536.5,228.7 536.0,228.3 535.5,228.5 535.0,229.0 534.5,229.7 534.0,229.9 533.5,228.9 533.0,230.0 532.5,229.8 532.0,229.9 531.5,230.2 531.0,230.0 530.5,230.6 530.0,230.4 529.5,231.5 529.0,231.0 528.5,231.4 528.0,232.2 527.5,231.9 527.0,231.9 526.5,232.9 526.0,232.8 525.5,232.2 525.0,232.8 524.5,233.5 524.0,232.8 523.5,233.2 523.0,233.5 522.5,234.2 522.0,234.3 521.5,233.6 521.0,234.4 520.5,233.9 520.0,234.9 519.5,234.0 519.0,235.1 518.5,234.7 518.0,235.5 517.5,235.4 517.0,234.6 516.5,235.5 516.0,235.4" fill="#f8ee10"/>
<polygon points="771.5,229.4 772.0,228.4 772.5,228.5 773.0,228.0 773.5,228.4 774.0,228.0 774.5,227.6 775.0,228.1 775.5,228.0 776.0,227.6 776.5,226.9 777.0,226.6 777.5,226.3 778.0,226.3 778.5,226.3 779.0,226.1 779.5,225.5 780.0,226.4 780.5,225.9 781.0,225.2 781.5,226.4 782.0,226.1 782.5,225.6 783.0,225.4 783.5,224.2 784.0,224.1 784.5,224.5 785.0,223.2 785.5,224.3 786.0,224.6 786.5,223.8 787.0,223.9 787.5,222.9 788.0,223.3 788.5,223.2 789.0,223.2 789.5,222.9 790.0,222.4 790.5,223.1 791.0,222.2 791.5,221.7 792.0,221.7 792.5,221.8 793.0,221.7 793.5,221.4 794.0,221.3 794.5,221.1 795.0,220.9 795.5,220.7 796.0,220.7 796.5,220.3 797.0,220.2 797.5,220.2 798.0,220.5 798.5,219.8 799.0,218.5 799.5,219.2 800.0,220.3 800.5,218.9 801.0,219.1 801.5,218.4 802.0,218.4 802.5,217.9 803.0,217.5 803.5,218.6 804.0,217.8 804.5,218.0 805.0,217.8 805.5,218.3 806.0,216.8 806.5,217.5 807.0,217.2 807.5,217.2 808.0,217.1 808.5,216.9 809.0,216.1 809.5,216.0 810.0,216.2 810.6,215.7 811.1,215.5 811.6,215.8 812.1,214.8 812.6,215.2 813.1,215.1 813.6,214.8 814.1,214.4 814.6,214.9 815.1,214.5 815.6,213.8 816.1,214.2 816.6,213.3 817.1,213.9 817.6,213.8 818.1,213.4 818.6,213.2 819.1,213.2 819.6,213.1 820.1,212.7 820.6,212.6 821.1,211.7 821.6,211.9 822.1,212.3 822.6,212.1 823.1,211.4 823.6,210.9 824.1,211.2 824.6,211.5 825.1,210.5 825.6,210.4 826.1,210.8 826.6,211.1 827.1,210.4 827.6,208.9 828.1,209.8 828.6,209.6 829.1,209.3 829.6,209.6 830.1,209.6 830.6,208.6 831.1,207.8 831.6,208.1 832.1,208.8 832.6,208.1 833.1,207.7 833.6,208.2 834.1,207.0 834.6,207.7 835.1,207.0 835.6,207.1 836.1,207.2 836.6,206.6 837.1,206.0 837.6,205.4 838.1,205.6 838.6,205.7 839.1,205.3 839.6,205.6 840.1,205.7 840.6,206.0 841.1,204.7 841.6,204.6 842.1,204.6 842.6,204.5 843.1,204.2 843.6,204.5 844.1,203.4 844.6,202.9 845.1,204.0 845.6,203.8 846.1,203.9 846.6,203.1 847.1,202.9 847.6,202.5 848.1,202.2 848.6,202.1 849.1,202.4 849.6,201.9 850.1,200.7 850.6,201.1 851.1,200.9 851.6,201.2 852.1,200.9 852.6,200.2 853.1,200.2 853.6,200.1 854.1,200.3 854.6,199.5 855.1,199.2 855.6,199.8 856.1,199.8 856.6,199.8 857.1,198.7 857.6,198.3 858.1,199.3 858.6,197.9 859.1,198.1 859.6,198.1 860.1,197.8 860.6,197.7 861.1,197.1 861.6,197.7 862.1,196.7 862.6,196.9 863.1,196.8 863.6,195.9 864.1,196.3 864.6,195.5 865.1,196.1 865.6,194.4 866.1,195.3 866.6,195.3 867.1,195.4 867.6,194.9 868.1,194.7 868.6,194.6 869.1,194.3 869.6,194.0 870.1,193.0 870.6,193.9 871.1,193.9 871.6,193.3 872.1,193.5 872.6,192.5 873.1,192.4 873.6,192.5 874.1,193.1 874.6,192.4 875.1,192.0 875.6,192.3 876.1,191.6 876.6,192.3 877.1,190.8 877.6,190.7 878.1,191.2 878.6,190.9 879.1,190.2 879.6,189.7 880.1,190.2 880.6,189.9 881.1,189.6 881.6,189.3 882.1,189.2 882.6,189.1 883.1,188.7 883.6,189.2 884.1,188.1 884.6,189.2 885.1,187.9 885.6,188.1 886.1,187.8 886.6,187.4 887.1,187.1 887.7,187.5 888.2,186.1 888.7,186.7 889.2,187.2 889.7,186.7 890.2,186.2 890.7,185.2 891.2,186.4 891.7,186.4 892.2,186.0 892.7,185.1 893.2,185.2 893.7,185.1 894.2,184.9 894.7,184.3 895.2,184.8 895.7,184.5 896.2,184.1 896.7,183.9 897.2,183.4 897.7,183.9 898.2,183.9 898.7,183.1 899.2,182.9 899.7,182.5 900.2,181.5 900.7,181.6 901.2,181.9 901.7,182.4 902.2,181.7 902.7,181.9 903.2,181.5 903.7,181.3 904.2,180.8 904.7,181.2 905.2,181.5 905.7,180.6 906.2,180.5 906.7,180.4 907.2,180.0 907.7,179.8 908.2,180.0 908.7,179.6 909.2,179.2 909.7,179.3 910.2,178.6 910.7,178.0 911.2,178.0 911.7,178.6 912.2,178.3 912.7,178.6 913.2,177.6 913.7,176.9 914.2,177.9 914.7,177.4 915.2,177.0 915.7,177.4 916.2,176.7 916.7,176.5 917.2,176.9 917.7,176.8 918.2,175.4 918.7,175.8 919.2,174.8 919.7,174.7 920.2,175.3 920.7,175.6 921.2,174.9 921.7,174.3 922.2,174.2 922.7,174.1 923.2,173.8 923.7,173.8 924.2,173.6 924.7,173.2 925.2,173.2 925.7,173.3 926.2,172.5 926.7,173.2 927.2,172.1 927.7,172.1 928.2,171.8 928.7,171.5 929.2,171.3 929.7,171.8 930.2,171.4 930.7,171.2 931.2,171.2 931.7,170.7 932.2,171.1 932.7,170.2 933.2,170.2 933.7,169.6 934.2,170.8 934.7,170.3 935.2,169.8 935.7,169.8 936.2,168.8 936.7,169.2 937.2,168.9 937.7,168.6 938.2,168.6 938.7,168.0 939.2,167.1 939.7,167.2 940.2,167.2 940.7,167.6 941.2,167.7 941.7,167.1 942.2,166.5 942.7,166.2 943.2,166.7 943.7,166.1 944.2,166.7 944.7,165.4 945.2,165.5 945.7,165.3 946.2,165.6 946.7,165.2 947.2,165.7 947.7,164.9 948.2,164.8 948.7,163.4 949.2,164.1 949.7,164.1 950.2,163.4 950.7,163.7 951.2,163.1 951.7,163.4 952.2,163.0 952.7,161.8 953.2,162.7 953.7,163.0 954.2,162.5 954.7,162.1 955.2,162.3 955.7,162.3 956.2,161.3 956.7,161.2 957.2,161.6 957.7,160.6 958.2,160.9 958.7,161.0 959.2,160.3 959.7,159.5 960.2,160.2 960.7,159.1 961.2,159.4 961.7,159.7 962.2,160.0 962.7,159.3 963.2,158.1 963.7,158.2 964.2,158.5 964.8,159.0 965.3,158.2 965.8,158.0 966.3,158.0 966.8,157.6 967.3,157.7 967.8,157.2 968.3,157.2 968.8,156.8 969.3,156.8 969.8,156.5 970.3,155.8 970.8,156.3 971.3,155.4 971.8,155.5 972.3,155.2 972.8,155.2 973.3,155.5 973.8,154.5 974.3,154.9 974.8,154.0 975.3,153.9 975.8,154.2 976.3,153.9 976.8,153.8 977.3,153.3 977.8,153.6 978.3,153.6 978.8,153.9 979.3,152.8 979.8,152.3 980.3,153.3 980.8,151.6 981.3,152.9 981.8,151.4 982.3,152.0 982.8,151.4 983.3,151.4 983.8,151.0 984.3,150.8 984.8,151.0 985.3,151.4 985.8,150.5 986.3,150.2 986.8,150.3 987.3,149.6 987.8,149.8 988.3,149.9 988.8,149.2 989.3,149.1 989.8,149.0 990.3,148.2 990.8,149.2 991.3,148.2 991.8,148.0 992.3,148.1 992.8,147.8 993.3,148.0 993.8,147.7 994.3,147.4 994.8,147.0 995.3,147.0 995.8,146.4 996.3,146.8 996.8,146.9 997.3,146.6 997.8,145.4 998.3,145.8 998.8,145.7 999.3,145.6 999.8,145.5 1000.3,145.0 1000.8,144.4 1001.3,144.7 1001.8,144.4 1002.3,144.9 1002.8,143.6 1002.8,155.4 1002.3,155.6 1001.8,155.5 1001.3,156.4 1000.8,155.9 1000.3,156.4 999.8,156.7 999.3,156.8 998.8,156.8 998.3,157.1 997.8,156.9 997.3,156.7 996.8,157.5 996.3,157.6 995.8,156.7 995.3,157.2 994.8,158.0 994.3,158.1 993.8,158.7 993.3,157.2 992.8,158.2 992.3,158.1 991.8,158.9 991.3,158.9 990.8,158.2 990.3,159.1 989.8,158.9 989.3,159.2 988.8,160.6 988.3,159.6 987.8,159.7 987.3,159.7 986.8,159.7 986.3,159.8 985.8,160.6 985.3,159.4 984.8,160.9 984.3,161.1 983.8,160.5 983.3,160.7 982.8,160.9 982.3,161.4 981.8,160.4 981.3,161.4 980.8,161.1 980.3,161.4 979.8,162.2 979.3,161.1 978.8,162.8 978.3,161.6 977.8,162.7 977.3,161.5 976.8,161.8 976.3,163.0 975.8,162.7 975.3,163.4 974.8,163.5 974.3,163.2 973.8,163.8 973.3,163.4 972.8,164.0 972.3,164.0 971.8,164.4 971.3,164.5 970.8,165.2 970.3,164.9 969.8,165.4 969.3,165.9 968.8,165.8 968.3,166.0 967.8,165.9 967.3,165.8 966.8,166.5 966.3,166.3 965.8,166.8 965.3,167.2 964.8,167.5 964.2,166.8 963.7,167.2 963.2,168.0 962.7,168.1 962.2,168.6 961.7,169.1 961.2,168.6 960.7,168.9 960.2,169.5 959.7,168.8 959.2,169.7 958.7,169.7 958.2,170.0 957.7,170.5 957.2,170.5 956.7,170.1 956.2,170.5 955.7,170.9 955.2,170.7 954.7,171.7 954.2,171.7 953.7,171.5 953.2,172.3 952.7,172.2 952.2,172.2 951.7,172.3 951.2,172.7 950.7,173.0 950.2,172.8 949.7,173.2 949.2,173.9 948.7,174.0 948.2,174.1 947.7,174.5 947.2,174.6 946.7,174.5 946.2,174.3 945.7,174.9 945.2,175.2 944.7,176.4 944.2,176.0 943.7,175.6 943.2,176.1 942.7,175.9 942.2,176.3 941.7,177.0 941.2,176.4 940.7,177.3 940.2,176.8 939.7,177.5 939.2,177.1 938.7,177.5 938.2,178.1 937.7,178.0 937.2,178.2 936.7,178.0 936.2,178.5 935.7,178.6 935.2,179.0 934.7,178.7 934.2,178.4 933.7,179.7 933.2,179.2 932.7,179.2 932.2,179.4 931.7,180.4 931.2,179.8 930.7,180.6 930.2,180.7 929.7,180.0 929.2,180.9 928.7,181.2 928.2,181.6 927.7,181.1 927.2,181.3 926.7,181.5 926.2,182.1 925.7,181.9 925.2,182.6 924.7,183.1 924.2,182.9 923.7,183.3 923.2,183.5 922.7,183.8 922.2,183.9 921.7,183.2 921.2,184.2 920.7,184.1 920.2,184.3 919.7,183.9 919.2,185.5 918.7,184.8 918.2,184.8 917.7,185.4 917.2,185.5 916.7,186.1 916.2,186.0 915.7,185.3 915.2,185.7 914.7,186.5 914.2,186.1 913.7,186.9 913.2,187.1 912.7,187.7 912.2,187.6 911.7,187.2 911.2,187.2 910.7,187.9 910.2,187.8 909.7,187.8 909.2,187.8 908.7,188.9 908.2,187.8 907.7,188.6 907.2,189.3 906.7,188.4 906.2,189.3 905.7,189.6 905.2,188.9 904.7,190.0 904.2,190.3 903.7,190.1 903.2,190.7 902.7,190.1 902.2,190.1 901.7,191.0 901.2,191.5 900.7,190.8 900.2,191.1 899.7,191.3 899.2,191.8 898.7,192.6 898.2,191.7 897.7,192.7 897.2,192.3 896.7,193.1 896.2,191.8 895.7,192.6 895.2,193.1 894.7,193.1 894.2,194.1 893.7,193.1 893.2,193.2 892.7,194.4 892.2,193.5 891.7,194.6 891.2,195.4 890.7,195.5 890.2,194.7 889.7,194.8 889.2,195.3 888.7,196.0 888.2,195.4 887.7,196.5 887.1,196.2 886.6,195.7 886.1,195.4 885.6,196.2 885.1,197.0 884.6,196.8 884.1,197.7 883.6,196.9 883.1,197.5 882.6,198.2 882.1,197.5 881.6,198.0 881.1,198.4 880.6,197.9 880.1,199.2 879.6,199.2 879.1,198.8 878.6,199.8 878.1,199.4 877.6,200.4 877.1,199.6 876.6,199.5 876.1,199.9 875.6,200.3 875.1,200.3 874.6,200.5 874.1,200.8 873.6,200.3 873.1,201.3 872.6,200.9 872.1,201.6 871.6,201.1 871.1,201.8 870.6,201.8 870.1,202.2 869.6,202.3 869.1,202.0 868.6,202.0 868.1,202.4 867.6,203.6 867.1,203.5 866.6,203.2 866.1,203.4 865.6,203.3 865.1,203.6 864.6,203.3 864.1,203.7 863.6,204.6 863.1,204.5 862.6,205.2 862.1,205.1 861.6,204.9 861.1,205.6 860.6,205.5 860.1,206.0 859.6,206.3 859.1,205.7 858.6,206.0 858.1,206.5 857.6,206.4 857.1,207.0 856.6,206.7 856.1,206.9 855.6,207.0 855.1,208.2 854.6,206.7 854.1,208.3 853.6,208.2 853.1,207.6 852.6,207.7 852.1,208.2 851.6,208.7 851.1,209.1 850.6,208.6 850.1,208.8 849.6,208.6 849.1,209.0 848.6,209.6 848.1,209.7 847.6,208.9 847.1,210.8 846.6,210.2 846.1,211.3 845.6,211.0 845.1,210.7 844.6,210.6 844.1,211.9 843.6,211.6 843.1,212.6 842.6,211.5 842.1,211.8 841.6,211.5 841.1,211.7 840.6,212.4 840.1,212.1 839.6,213.2 839.1,213.1 838.6,214.0 838.1,213.5 837.6,213.3 837.1,213.8 836.6,214.8 836.1,213.5 835.6,214.1 835.1,214.6 834.6,214.6 834.1,214.9 833.6,215.3 833.1,214.9 832.6,215.9 832.1,215.6 831.6,215.7 831.1,216.0 830.6,216.5 830.1,216.6 829.6,216.4 829.1,216.5 828.6,216.5 828.1,217.2 827.6,217.1 827.1,217.2 826.6,217.2 826.1,217.6 825.6,218.0 825.1,218.3 824.6,217.9 824.1,218.8 823.6,218.7 823.1,218.5 822.6,219.0 822.1,219.1 821.6,219.3 821.1,219.4 820.6,220.3 820.1,219.8 819.6,220.5 819.1,220.1 818.6,219.8 818.1,220.4 817.6,221.5 817.1,220.4 816.6,221.0 816.1,220.0 815.6,221.1 815.1,221.7 814.6,221.3 814.1,222.4 813.6,222.0 813.1,222.0 812.6,221.7 812.1,222.3 811.6,222.9 811.1,223.0 810.6,223.0 810.0,223.2 809.5,224.1 809.0,223.5 808.5,223.4 808.0,223.3 807.5,224.3 807.0,224.0 806.5,224.7 806.0,225.1 805.5,224.3 805.0,225.5 804.5,224.8 804.0,225.1 803.5,225.2 803.0,225.5 802.5,225.2 802.0,225.9 801.5,226.5 801.0,225.4 800.5,226.3 800.0,225.7 799.5,226.8 799.0,227.3 798.5,227.1 798.0,227.3 797.5,226.7 797.0,226.8 796.5,227.9 796.0,228.0 795.5,228.7 795.0,228.5 794.5,228.8 794.0,228.0 793.5,229.0 793.0,228.9 792.5,229.7 792.0,228.6 791.5,229.1 791.0,229.9 790.5,229.6 790.0,230.0 789.5,229.5 789.0,229.0 788.5,230.2 788.0,229.6 787.5,230.4 787.0,230.1 786.5,230.8 786.0,230.3 785.5,231.2 785.0,231.2 784.5,231.4 784.0,231.3 783.5,231.5 783.0,232.0 782.5,231.4 782.0,232.0 781.5,232.1 781.0,233.2 780.5,233.1 780.0,232.9 779.5,233.2 779.0,233.3 778.5,233.1 778.0,233.6 777.5,233.7 777.0,233.9 776.5,234.1 776.0,233.8 775.5,234.4 775.0,234.7 774.5,234.7 774.0,234.9 773.5,235.1 773.0,235.2 772.5,235.4 772.0,235.5 771.5,236.4" fill="#f8ee10"/>
<line x1="515.50" y1="97" x2="515.50" y2="262" stroke="#c8cc50" stroke-width="1.2"/>
<line x1="771.80" y1="115" x2="771.80" y2="264" stroke="#e8e040" stroke-width="1.1"/>
<text x="22.16" y="71.5" font-size="14.5" fill="#ffffff" text-anchor="start" font-weight="normal" textLength="176.92" lengthAdjust="spacingAndGlyphs" >1 Full RF Spectrum (#0)</text>
<circle cx="415.8" cy="66.6" r="4.1" fill="#f4e838" stroke="#101010" stroke-width="1.5"/>
<text x="423.49" y="71.2" font-size="13.5" fill="#d8e0f8" text-anchor="start" font-weight="normal" textLength="64.97" lengthAdjust="spacingAndGlyphs" >1 AP Clrw</text>
<text x="516.09" y="71.5" font-size="14.5" fill="#ffffff" text-anchor="start" font-weight="normal" textLength="192.62" lengthAdjust="spacingAndGlyphs" >2 Region FM Time Domain</text>
<circle cx="910.5" cy="66.6" r="4.1" fill="#f4e838" stroke="#101010" stroke-width="1.5"/>
<text x="917.48" y="71.2" font-size="13.5" fill="#e0e0e0" text-anchor="start" font-weight="normal" textLength="65.48" lengthAdjust="spacingAndGlyphs" >1 AP Clrw</text>
<text x="20.61" y="313" font-size="14" fill="#f0f0f0" text-anchor="start" font-weight="normal" textLength="91.77" lengthAdjust="spacingAndGlyphs" >CF 72.0 GHz</text>
<text x="160.36" y="313" font-size="14" fill="#f0f0f0" text-anchor="start" font-weight="normal" textLength="63.55" lengthAdjust="spacingAndGlyphs" >1001 pts</text>
<text x="261.92" y="313" font-size="14" fill="#f0f0f0" text-anchor="start" font-weight="normal" textLength="88.44" lengthAdjust="spacingAndGlyphs" >831.2 MHz/</text>
<text x="362.41" y="313" font-size="14" fill="#f0f0f0" text-anchor="start" font-weight="normal" textLength="142.21" lengthAdjust="spacingAndGlyphs" >Meas BW 8.31 GHz</text>
<text x="521.05" y="313" font-size="14" fill="#f0f0f0" text-anchor="start" font-weight="normal" textLength="35.39" lengthAdjust="spacingAndGlyphs" >0.0 s</text>
<text x="665.46" y="313" font-size="14" fill="#f0f0f0" text-anchor="start" font-weight="normal" textLength="63.65" lengthAdjust="spacingAndGlyphs" >1001 pts</text>
<text x="782.07" y="313" font-size="14" fill="#f0f0f0" text-anchor="start" font-weight="normal" textLength="70.8" lengthAdjust="spacingAndGlyphs" >400.0 µs/</text>
<text x="949.59" y="313" font-size="14" fill="#f0f0f0" text-anchor="start" font-weight="normal" textLength="49.0" lengthAdjust="spacingAndGlyphs" >4.0 ms</text>
<rect x="16" y="320" width="992" height="256" fill="#000" />
<rect x="16" y="320" width="1" height="256" fill="#3a4250" />
<rect x="17" y="320" width="2" height="256" fill="#0c0e14" />
<rect x="20" y="321" width="166" height="16.5" fill="#2a2d30" />
<text x="21.84" y="334" font-size="14" fill="#ffffff" text-anchor="start" font-weight="normal" textLength="138.98" lengthAdjust="spacingAndGlyphs" >3 Full Spectrogram</text>
<defs><linearGradient id="cb" x1="186" x2="998" y1="0" y2="0" gradientUnits="userSpaceOnUse">
<stop offset="0" stop-color="#1a26e0"/>
<stop offset="0.1" stop-color="#1a58e4"/>
<stop offset="0.2" stop-color="#1496e4"/>
<stop offset="0.3" stop-color="#10ccd0"/>
<stop offset="0.4" stop-color="#14e470"/>
<stop offset="0.5" stop-color="#20e034"/>
<stop offset="0.6" stop-color="#78e018"/>
<stop offset="0.7" stop-color="#d4e018"/>
<stop offset="0.8" stop-color="#f0ac18"/>
<stop offset="0.9" stop-color="#f08418"/>
<stop offset="0.95" stop-color="#f05818"/>
<stop offset="1" stop-color="#e82020"/>
</linearGradient>
<linearGradient id="cbs" x1="0" x2="0" y1="0" y2="1">
<stop offset="0" stop-color="#000" stop-opacity="0.45"/>
<stop offset="0.2" stop-color="#000" stop-opacity="0"/>
<stop offset="0.8" stop-color="#000" stop-opacity="0"/>
<stop offset="1" stop-color="#000" stop-opacity="0.45"/>
</linearGradient>
<linearGradient id="sg" x1="20" x2="1003" y1="0" y2="0" gradientUnits="userSpaceOnUse">
<stop offset="0" stop-color="#04e47c"/>
<stop offset="0.3" stop-color="#08e472"/>
<stop offset="0.55" stop-color="#04e284"/>
<stop offset="0.8" stop-color="#08e46c"/>
<stop offset="1" stop-color="#06e478"/>
</linearGradient>
</defs>
<rect x="186" y="321" width="812" height="16.5" fill="url(#cb)" />
<rect x="186" y="321" width="812" height="16.5" fill="url(#cbs)" />
<rect x="998" y="321" width="5" height="16.5" fill="#3a4050" />
<text x="188.52" y="332.6" font-size="11" fill="#000" text-anchor="start" font-weight="bold" textLength="44.24" lengthAdjust="spacingAndGlyphs" fill-opacity="0.6">-80dBm</text>
<line x1="266.53999999999996" y1="321.5" x2="266.53999999999996" y2="337" stroke="#fff" stroke-opacity="0.18"/>
<text x="241.68" y="332.6" font-size="11" fill="#000" text-anchor="start" font-weight="bold" textLength="47.01" lengthAdjust="spacingAndGlyphs" fill-opacity="0.6">-70dBm</text>
<line x1="347.76" y1="321.5" x2="347.76" y2="337" stroke="#fff" stroke-opacity="0.18"/>
<text x="322.9" y="332.6" font-size="11" fill="#000" text-anchor="start" font-weight="bold" textLength="47.01" lengthAdjust="spacingAndGlyphs" fill-opacity="0.6">-60dBm</text>
<line x1="428.98" y1="321.5" x2="428.98" y2="337" stroke="#fff" stroke-opacity="0.18"/>
<text x="404.12" y="332.6" font-size="11" fill="#000" text-anchor="start" font-weight="bold" textLength="47.01" lengthAdjust="spacingAndGlyphs" fill-opacity="0.6">-50dBm</text>
<line x1="510.2" y1="321.5" x2="510.2" y2="337" stroke="#fff" stroke-opacity="0.18"/>
<text x="485.34" y="332.6" font-size="11" fill="#000" text-anchor="start" font-weight="bold" textLength="47.01" lengthAdjust="spacingAndGlyphs" fill-opacity="0.6">-40dBm</text>
<line x1="591.42" y1="321.5" x2="591.42" y2="337" stroke="#fff" stroke-opacity="0.18"/>
<text x="566.56" y="332.6" font-size="11" fill="#000" text-anchor="start" font-weight="bold" textLength="47.01" lengthAdjust="spacingAndGlyphs" fill-opacity="0.6">-30dBm</text>
<line x1="672.64" y1="321.5" x2="672.64" y2="337" stroke="#fff" stroke-opacity="0.18"/>
<text x="647.78" y="332.6" font-size="11" fill="#000" text-anchor="start" font-weight="bold" textLength="47.01" lengthAdjust="spacingAndGlyphs" fill-opacity="0.6">-20dBm</text>
<line x1="753.86" y1="321.5" x2="753.86" y2="337" stroke="#fff" stroke-opacity="0.18"/>
<text x="729.0" y="332.6" font-size="11" fill="#000" text-anchor="start" font-weight="bold" textLength="47.01" lengthAdjust="spacingAndGlyphs" fill-opacity="0.6">-10dBm</text>
<line x1="835.0799999999999" y1="321.5" x2="835.0799999999999" y2="337" stroke="#fff" stroke-opacity="0.18"/>
<text x="817.46" y="332.6" font-size="11" fill="#000" text-anchor="start" font-weight="bold" textLength="32.51" lengthAdjust="spacingAndGlyphs" fill-opacity="0.6">0dBm</text>
<line x1="916.3" y1="321.5" x2="916.3" y2="337" stroke="#fff" stroke-opacity="0.18"/>
<text x="894.72" y="332.6" font-size="11" fill="#000" text-anchor="start" font-weight="bold" textLength="40.16" lengthAdjust="spacingAndGlyphs" fill-opacity="0.6">10dBm</text>
<text x="954.37" y="332.6" font-size="11" fill="#000" text-anchor="start" font-weight="bold" textLength="40.92" lengthAdjust="spacingAndGlyphs" fill-opacity="0.6">20dBm</text>
<line x1="186" y1="321.5" x2="998" y2="321.5" stroke="#000" stroke-opacity="0.3"/>
<rect x="20" y="337.5" width="983" height="211" fill="#06e88a" />
<clipPath id="hbA"><rect x="20" y="337.5" width="983" height="99.69999999999999"/></clipPath>
<linearGradient id="hbAg" gradientUnits="userSpaceOnUse" x1="491.5" y1="307.8" x2="508.5" y2="456.9"><stop offset="0" stop-color="#12e864" stop-opacity="0"/><stop offset="0.5" stop-color="#12e864" stop-opacity="0.9"/><stop offset="1" stop-color="#12e864" stop-opacity="0"/></linearGradient>
<polygon clip-path="url(#hbA)" points="20,351.8 1003,240.3 1003,410.3 20,521.8" fill="url(#hbAg)"/>
<clipPath id="hbB"><rect x="20" y="437.2" width="983" height="111.30000000000001"/></clipPath>
<linearGradient id="hbBg" gradientUnits="userSpaceOnUse" x1="491.5" y1="421.3" x2="508.5" y2="570.4"><stop offset="0" stop-color="#12e864" stop-opacity="0"/><stop offset="0.5" stop-color="#12e864" stop-opacity="0.9"/><stop offset="1" stop-color="#12e864" stop-opacity="0"/></linearGradient>
<polygon clip-path="url(#hbB)" points="20,465.3 1003,353.8 1003,523.8 20,635.3" fill="url(#hbBg)"/>
<linearGradient id="rside" gradientUnits="userSpaceOnUse" x1="640" y1="0" x2="1003" y2="0"><stop offset="0" stop-color="#12e864" stop-opacity="0"/><stop offset="1" stop-color="#18ea58" stop-opacity="0.85"/></linearGradient>
<rect x="640" y="337.5" width="363" height="211" fill="url(#rside)" />
<clipPath id="spc"><rect x="20" y="337.5" width="983" height="211"/></clipPath><g clip-path="url(#spc)">
<line x1="690" y1="437.5" x2="1003" y2="421" stroke="#30f040" stroke-width="1.2" stroke-opacity="0.4"/>
<line x1="780" y1="548" x2="1003" y2="530" stroke="#30f040" stroke-width="1.2" stroke-opacity="0.35"/>
<line x1="20" y1="436.8" x2="891" y2="338" stroke="#b8d820" stroke-width="4.2" stroke-opacity="0.5"/>
<line x1="20" y1="436.8" x2="891" y2="338" stroke="#d4aa14" stroke-width="2.5" stroke-opacity="1"/>
<line x1="20" y1="436.8" x2="891" y2="338" stroke="#e8d028" stroke-width="1.3" stroke-opacity="0.75" stroke-dasharray="3 4"/>
<line x1="40" y1="548" x2="1003" y2="436" stroke="#b8d820" stroke-width="4.2" stroke-opacity="0.5"/>
<line x1="40" y1="548" x2="1003" y2="436" stroke="#d4aa14" stroke-width="2.5" stroke-opacity="1"/>
<line x1="40" y1="548" x2="1003" y2="436" stroke="#e8d028" stroke-width="1.3" stroke-opacity="0.75" stroke-dasharray="3 4"/>
<linearGradient id="fd1" gradientUnits="userSpaceOnUse" x1="748" y1="338" x2="932" y2="370"><stop offset="0" stop-color="#c8d818" stop-opacity="1"/><stop offset="0.7" stop-color="#a8e020" stop-opacity="0.85"/><stop offset="1" stop-color="#60e830" stop-opacity="0"/></linearGradient>
<linearGradient id="fd2" gradientUnits="userSpaceOnUse" x1="676" y1="437" x2="934" y2="482"><stop offset="0" stop-color="#c8d818" stop-opacity="1"/><stop offset="0.7" stop-color="#a8e020" stop-opacity="0.85"/><stop offset="1" stop-color="#60e830" stop-opacity="0"/></linearGradient>
<line x1="748" y1="338" x2="932" y2="370" stroke="url(#fd1)" stroke-width="2.5" stroke-opacity="1"/>
<line x1="676" y1="437.2" x2="934" y2="482" stroke="url(#fd2)" stroke-width="2.5" stroke-opacity="1"/>
</g>
<rect x="20" y="548.5" width="983" height="25.5" fill="#000" />
<text x="20.61" y="570" font-size="14" fill="#f0f0f0" text-anchor="start" font-weight="normal" textLength="92.18" lengthAdjust="spacingAndGlyphs" >CF 72.0 GHz</text>
<text x="355.45" y="570" font-size="14" fill="#f0f0f0" text-anchor="start" font-weight="normal" textLength="64.16" lengthAdjust="spacingAndGlyphs" >1001 pts</text>
<text x="555.0" y="570" font-size="14" fill="#f0f0f0" text-anchor="start" font-weight="normal" textLength="152.45" lengthAdjust="spacingAndGlyphs" >Meas BW 8.312 GHz</text>
<text x="921.44" y="570" font-size="14" fill="#f0f0f0" text-anchor="start" font-weight="normal" textLength="77.27" lengthAdjust="spacingAndGlyphs" >Frame # 0</text>
<rect x="16" y="574" width="992" height="2" fill="#3a4048" />
<rect x="506" y="159" width="14" height="57" fill="#c0c0c0" fill-opacity="0.13"/>
<rect x="513" y="163" width="1" height="2" fill="#d0d0d0" fill-opacity="0.3"/>
<rect x="513" y="168" width="1" height="2" fill="#d0d0d0" fill-opacity="0.3"/>
<rect x="513" y="173" width="1" height="2" fill="#d0d0d0" fill-opacity="0.3"/>
<rect x="513" y="178" width="1" height="2" fill="#d0d0d0" fill-opacity="0.3"/>
<rect x="513" y="183" width="1" height="2" fill="#d0d0d0" fill-opacity="0.3"/>
<rect x="513" y="188" width="1" height="2" fill="#d0d0d0" fill-opacity="0.3"/>
<rect x="513" y="193" width="1" height="2" fill="#d0d0d0" fill-opacity="0.3"/>
<rect x="513" y="198" width="1" height="2" fill="#d0d0d0" fill-opacity="0.3"/>
<rect x="513" y="203" width="1" height="2" fill="#d0d0d0" fill-opacity="0.3"/>
<rect x="513" y="208" width="1" height="2" fill="#d0d0d0" fill-opacity="0.3"/>
<rect x="483" y="311" width="57" height="14" fill="#c0c0c0" fill-opacity="0.16"/>
<rect x="488" y="318" width="2" height="1" fill="#d0d0d0" fill-opacity="0.3"/>
<rect x="493" y="318" width="2" height="1" fill="#d0d0d0" fill-opacity="0.3"/>
<rect x="498" y="318" width="2" height="1" fill="#d0d0d0" fill-opacity="0.3"/>
<rect x="503" y="318" width="2" height="1" fill="#d0d0d0" fill-opacity="0.3"/>
<rect x="508" y="318" width="2" height="1" fill="#d0d0d0" fill-opacity="0.3"/>
<rect x="513" y="318" width="2" height="1" fill="#d0d0d0" fill-opacity="0.3"/>
<rect x="518" y="318" width="2" height="1" fill="#d0d0d0" fill-opacity="0.3"/>
<rect x="523" y="318" width="2" height="1" fill="#d0d0d0" fill-opacity="0.3"/>
<rect x="528" y="318" width="2" height="1" fill="#d0d0d0" fill-opacity="0.3"/>
<rect x="533" y="318" width="2" height="1" fill="#d0d0d0" fill-opacity="0.3"/></svg></body></html>
